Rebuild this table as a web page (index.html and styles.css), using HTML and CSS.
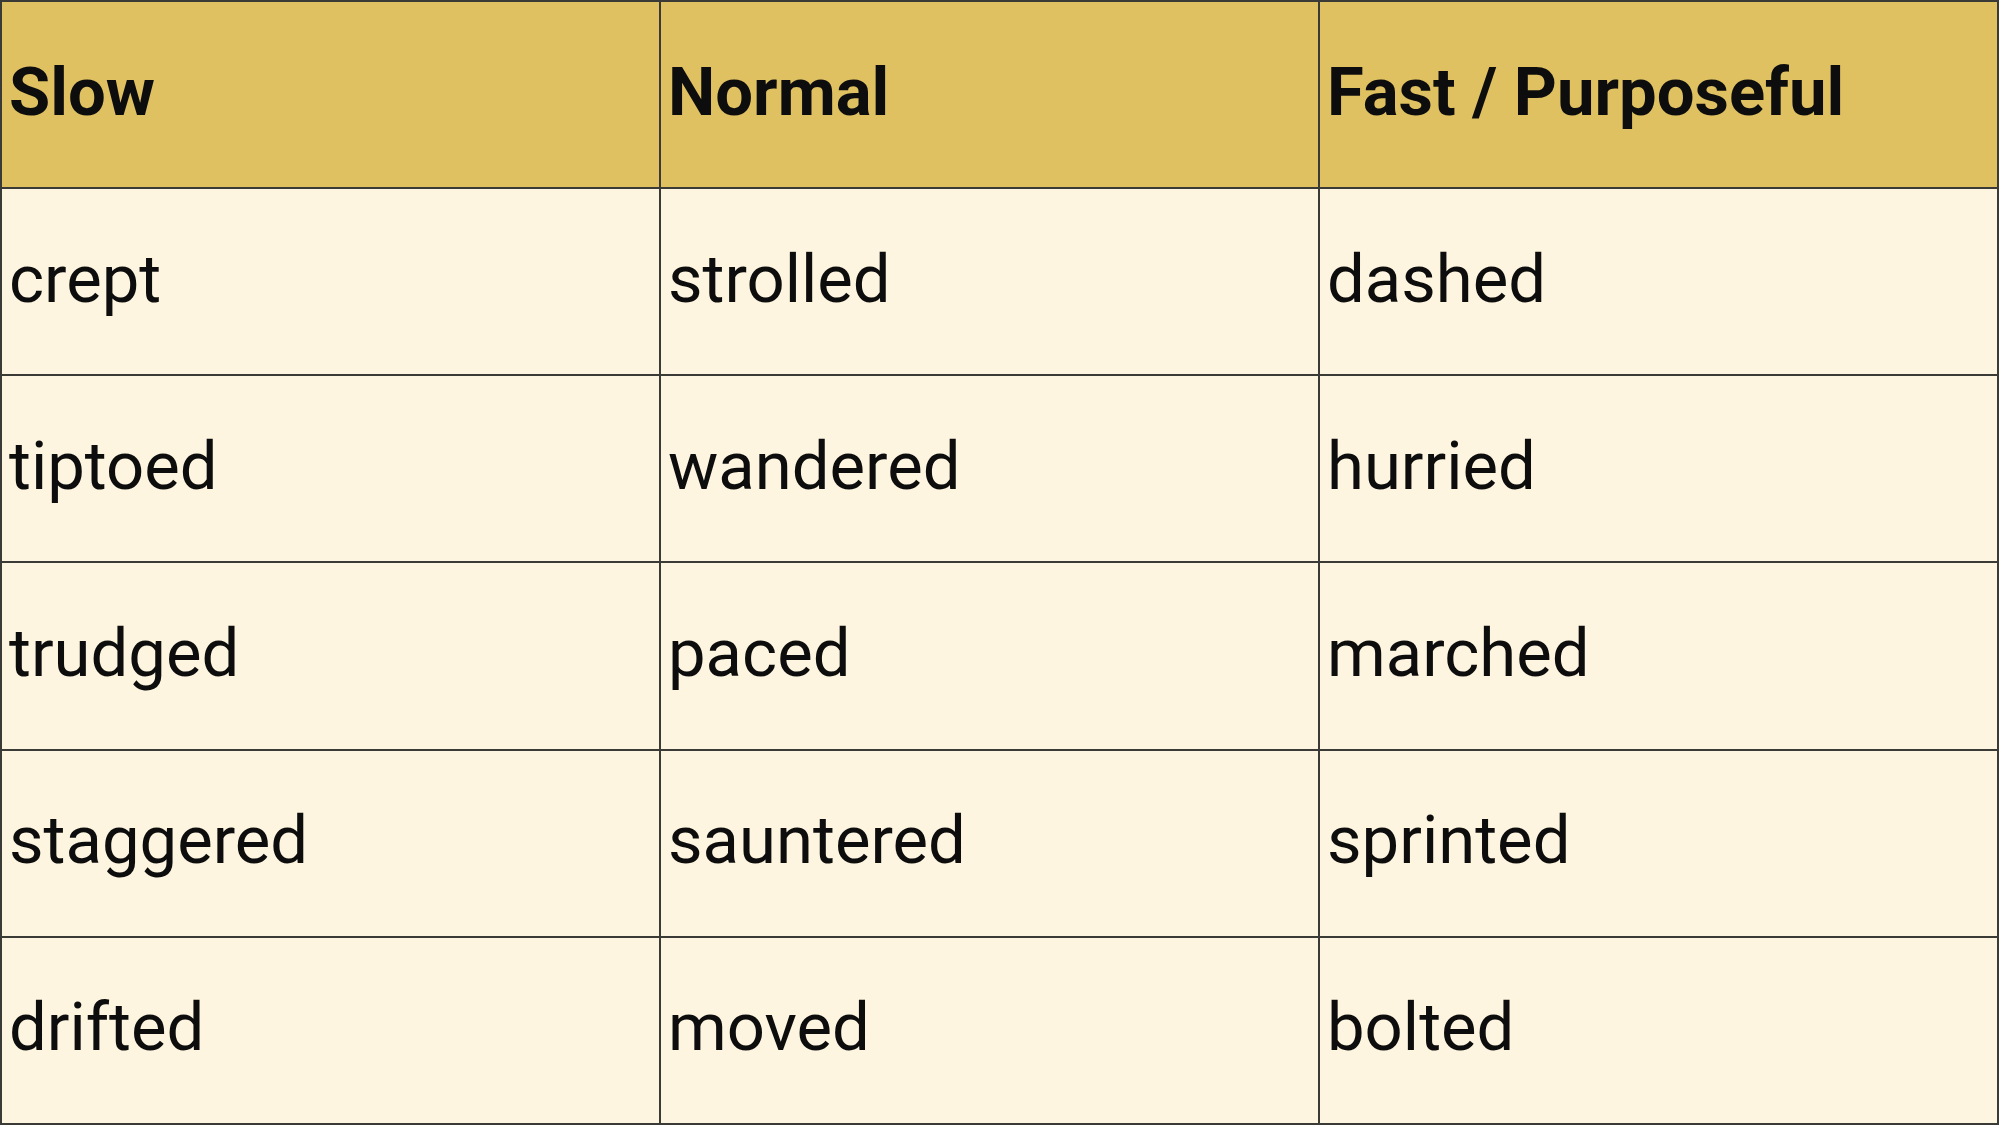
FILE: index.html
```html
<!DOCTYPE html>
<html>
<head>
<meta charset="utf-8">
<link rel="stylesheet" href="styles.css">
</head>
<body>
<table class="verbs">
  <colgroup>
    <col class="c1"><col class="c2"><col class="c3">
  </colgroup>
  <thead>
    <tr><th>Slow</th><th>Normal</th><th>Fast / Purposeful</th></tr>
  </thead>
  <tbody>
    <tr><td>crept</td><td>strolled</td><td>dashed</td></tr>
    <tr><td>tiptoed</td><td>wandered</td><td>hurried</td></tr>
    <tr><td>trudged</td><td>paced</td><td>marched</td></tr>
    <tr><td>staggered</td><td>sauntered</td><td>sprinted</td></tr>
    <tr><td>drifted</td><td>moved</td><td>bolted</td></tr>
  </tbody>
</table>
</body>
</html>
```
FILE: styles.css
```css
html, body {
  margin: 0;
  padding: 0;
  background: #fdf5df;
  overflow: hidden;
}
.verbs {
  width: 1999px;
  height: 1125px;
  border-collapse: collapse;
  table-layout: fixed;
  font-family: Roboto, "Liberation Sans", sans-serif;
  font-size: 67px;
  color: #0d0d0d;
}
.c1 { width: 659px; }
.c2 { width: 659px; }
.verbs tr {
  height: 187px;
}
.verbs th, .verbs td {
  border: 2px solid #3a3a36;
  padding: 0 0 6px 7px;
  text-align: left;
  vertical-align: middle;
  white-space: nowrap;
}
.verbs th {
  background: #e0c162;
  font-weight: 700;
}
.verbs td {
  background: #fdf5df;
  font-weight: 400;
}
```
